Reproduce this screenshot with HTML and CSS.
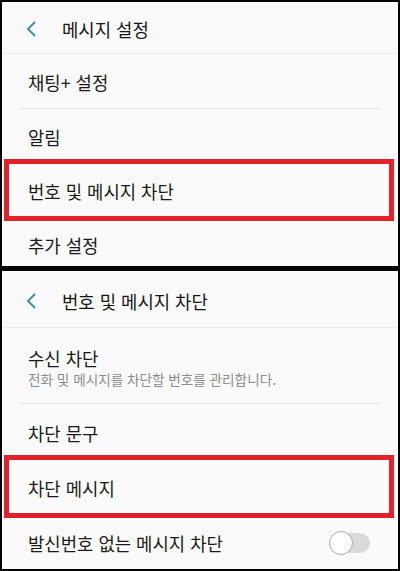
FILE: index.html
```html
<!DOCTYPE html>
<html lang="ko">

<head>
    <meta charset="UTF-8">
    <meta name="viewport" content="width=device-width, initial-scale=1.0">
    <title>메시지 설정</title>
    <link rel="stylesheet" href="styles.css">
</head>

<body>
    <div class="shot">
        <!-- 위쪽 화면 -->
        <div class="panel panel-top">
            <div class="head">
                <svg class="back" width="12" height="18" viewBox="0 0 12 18"><polyline points="10,2 3,9 10,16" fill="none" stroke="#3f8fa2" stroke-width="2"/></svg>
                <span class="head-title">메시지 설정</span>
            </div>
            <div class="item">채팅+ 설정</div>
            <div class="line"></div>
            <div class="item">알림</div>
            <div class="item marked">번호 및 메시지 차단</div>
            <div class="item">추가 설정</div>
        </div>

        <!-- 아래쪽 화면 -->
        <div class="panel panel-bottom">
            <div class="head head-b">
                <svg class="back" width="12" height="18" viewBox="0 0 12 18"><polyline points="10,2 3,9 10,16" fill="none" stroke="#3f8fa2" stroke-width="2"/></svg>
                <span class="head-title">번호 및 메시지 차단</span>
            </div>
            <div class="item item-sub">
                <p class="sub-title">수신 차단</p>
                <p class="sub-desc">전화 및 메시지를 차단할 번호를 관리합니다.</p>
            </div>
            <div class="line"></div>
            <div class="item item-b">차단 문구</div>
            <div class="item item-b marked">차단 메시지</div>
            <div class="item item-b item-switch">
                <span>발신번호 없는 메시지 차단</span>
                <span class="switch"><span class="knob"></span></span>
            </div>
        </div>
    </div>
</body>

</html>
```

FILE: styles.css
```css
* {
    padding: 0;
    margin: 0;
    box-sizing: border-box;
}

body {
    font-family: "Noto Sans CJK KR", "Noto Sans", sans-serif;
    color: #1a1a1a;
    background: #000;
}

.shot {
    width: 400px;
    height: 571px;
    border: 2px solid #000;
    display: flex;
    flex-direction: column;
    gap: 5px;
    background: #000;
}

.panel {
    background: #fafafa;
    overflow: hidden;
}

.panel-top {
    height: 264px;
    flex-shrink: 0;
}

.panel-bottom {
    flex: 1;
}

.head {
    height: 52px;
    border-bottom: 1px solid #ebebeb;
    display: flex;
    align-items: center;
    padding-left: 23px;
    padding-top: 2px;
}

.head-b {
    height: 57px;
    padding-top: 3px;
}

.back {
    display: block;
}

.head-title {
    font-size: 17.8px;
    margin-left: 25px;
    color: #161616;
}

.item {
    height: 54px;
    display: flex;
    align-items: center;
    padding: 2px 25px 0 26px;
    font-size: 17.8px;
}

.item-b {
    height: 55px;
}

.line {
    height: 1px;
    background: #e6e6e6;
    margin: 0 18px;
}

.item-sub {
    height: 75px;
    flex-direction: column;
    align-items: flex-start;
    justify-content: center;
    padding-top: 4px;
}

.sub-title {
    font-size: 17.8px;
    line-height: 22px;
}

.sub-desc {
    font-size: 13.6px;
    line-height: 18px;
    color: #8c8c8c;
    margin-top: 1px;
}

/* 빨간 표시 상자 */
.marked {
    position: relative;
}

.marked::after {
    content: "";
    position: absolute;
    left: 2px;
    right: 4px;
    top: -4px;
    bottom: -4px;
    border: 5px solid #e3212b;
}

.item-switch {
    justify-content: space-between;
    padding-right: 28px;
}

.switch {
    width: 40px;
    height: 20px;
    border-radius: 10px;
    background: #dadada;
    position: relative;
}

.switch .knob {
    position: absolute;
    left: -1px;
    top: -2px;
    width: 24px;
    height: 24px;
    border-radius: 50%;
    background: #fff;
    border: 1px solid #a8a8a8;
}
```
